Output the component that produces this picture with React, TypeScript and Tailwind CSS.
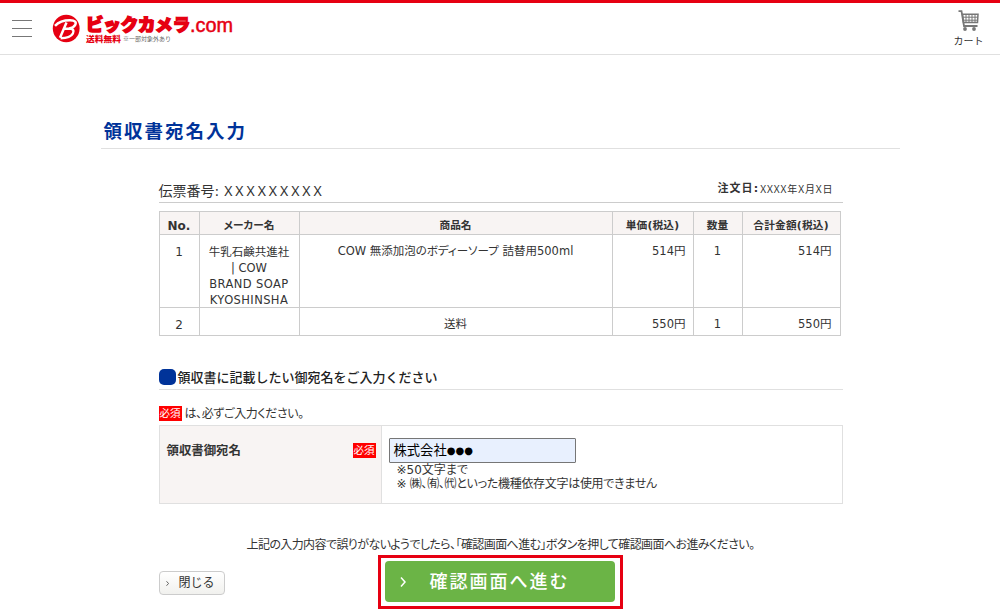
import React from 'react';

const items = [
  {
    no: 1,
    maker: ['牛乳石鹸共進社', '| COW', 'BRAND SOAP', 'KYOSHINSHA'],
    name: 'COW 無添加泡のボディーソープ 詰替用500ml',
    price: '514円',
    count: 1,
    total: '514円',
    height: 'h-[73px]',
  },
  { no: 2, maker: [], name: '送料', price: '550円', count: 1, total: '550円', height: 'h-[28px]' },
];

const Logo: React.FC = () => (
  <svg className="ml-5 mt-[9px]" width="190" height="38" viewBox="0 0 190 38">
    <ellipse cx="14.2" cy="16.5" rx="13.4" ry="13.7" fill="#e60012" />
    <path
      d="M3 13.8C7 9.5 12 8.2 18 8.2c5.3 0 6.6 2 5.2 4.6-1 1.900-3.200 3.200-6 3.700 4 .2 5.200 2.300 3.700 5-1.800 3.300-6.800 4.700-12.300 4.700M14.500 10.500L8 25.800M12.500 16.700h5"
      fill="none"
      stroke="#fff"
      strokeWidth="2.500"
      strokeLinejoin="round"
    />
    <text
      x="34"
      y="18.800"
      fontSize="16.500"
      fontWeight="900"
      fill="#e60012"
      stroke="#e60012"
      strokeWidth="1.600"
      textLength="104"
      lengthAdjust="spacingAndGlyphs"
      className="font-['Noto_Sans_CJK_JP',sans-serif]"
    >
      ビックカメラ
    </text>
    <text
      x="138"
      y="20"
      fontSize="20"
      fill="#e60012"
      stroke="#e60012"
      strokeWidth="0.500"
      textLength="43"
      lengthAdjust="spacingAndGlyphs"
      className="font-['Liberation_Sans',sans-serif]"
    >
      .com
    </text>
    <text
      x="34"
      y="29.500"
      fontSize="8"
      fontWeight="900"
      fill="#e60012"
      textLength="35"
      lengthAdjust="spacingAndGlyphs"
      className="font-['Noto_Sans_CJK_JP',sans-serif]"
    >
      送料無料
    </text>
    <text
      x="71"
      y="28.600"
      fontSize="6"
      fill="#666"
      textLength="48"
      lengthAdjust="spacingAndGlyphs"
      className="font-['Noto_Sans_CJK_JP',sans-serif]"
    >
      ※一部対象外あり
    </text>
  </svg>
);

const CartIcon: React.FC = () => (
  <svg width="22" height="22" viewBox="0 0 22 22" fill="none" stroke="#777">
    <path d="M0.500 1.200h3l2.500 14.800h13.500" strokeWidth="1.800" />
    <path d="M4.500 4.200h15.500L19.500 12.500H5.500z" strokeWidth="1.500" />
    <path d="M8 4v9M11 4v9M14 4v9M17 4v9M5 7.200h15M5 10.200h15" strokeWidth="1" />
    <circle cx="7" cy="19" r="1.900" fill="#777" stroke="none" />
    <circle cx="16" cy="19" r="1.900" fill="#777" stroke="none" />
  </svg>
);

const Required: React.FC = () => (
  <span className="flex h-[15px] w-[23px] shrink-0 items-center justify-center bg-[#f00] text-[10.500px] leading-none text-white">
    必須
  </span>
);

const Chevron: React.FC<{ className: string; width: number }> = ({ className, width }) => (
  <svg className={className} viewBox="0 0 6 10" fill="none" stroke="currentColor" strokeWidth={width}>
    <path d="M1 0.500L5 5L1 9.500" />
  </svg>
);

const App: React.FC = () => {
  return (
    <div className="h-[615px] overflow-hidden whitespace-nowrap bg-white font-['DejaVu_Sans','Noto_Sans_CJK_JP',sans-serif] text-[#333]">
      {/* Header */}
      <header className="flex h-[55px] border-b border-t-[3px] border-b-[#e0e0e0] border-t-[#e60012]">
        <button className="ml-3 mt-[17px] flex h-[17px] w-5 flex-col justify-between">
          <span className="h-px w-full bg-[#777]" />
          <span className="h-px w-full bg-[#777]" />
          <span className="h-px w-full bg-[#777]" />
        </button>
        <Logo />
        <div className="ml-auto mr-[17px] flex w-[29px] flex-col items-center pt-[7px]">
          <CartIcon />
          <span className="mt-[4px] text-[10px] leading-3">カート</span>
        </div>
      </header>

      <main className="mx-auto w-[799px] pt-[62px]">
        <h1 className="h-8 border-b border-[#e0e0e0] pl-[3px] text-[18.500px] font-bold leading-[30px] tracking-[2px] text-[#039]">
          領収書宛名入力
        </h1>

        <div className="ml-[58px] w-[684px]">
          {/* Order number and date */}
          <div className="mt-[25px] flex h-[29px] justify-between border-b border-[#ccc]">
            <p className="flex pt-[7px] text-[14px] leading-[20px]">
              <span>伝票番号:</span>
              <span className="ml-[5px] font-['Noto_Sans'] tracking-[2.950px]">XXXXXXXXX</span>
            </p>
            <p className="flex pr-[9px] pt-[6px] text-[11px] leading-[18px]">
              <span className="font-bold tracking-[1.100px]">注文日:</span>
              <span className="ml-px font-['Noto_Sans','Noto_Sans_CJK_JP'] text-[10px] tracking-[0.900px]">
                XXXX年X月X日
              </span>
            </p>
          </div>

          {/* Items */}
          <table className="mt-2 w-[682px] table-fixed border-collapse text-center text-[11.500px] leading-[16px]">
            <colgroup>
              <col className="w-[40px]" />
              <col className="w-[100px]" />
              <col className="w-[313px]" />
              <col className="w-[81px]" />
              <col className="w-[49px]" />
              <col className="w-[98px]" />
            </colgroup>
            <thead>
              <tr className="h-[23px] bg-[#f8f4f3] text-[10.700px] font-bold [&>th]:border [&>th]:border-[#ccc] [&>th]:p-0 [&>th]:pt-[6px]">
                <th className="text-[12px]">No.</th>
                <th className="[font-feature-settings:'palt']">メーカー名</th>
                <th>商品名</th>
                <th className="tracking-[0.200px]">単価(税込)</th>
                <th>数量</th>
                <th className="tracking-[0.200px]">合計金額(税込)</th>
              </tr>
            </thead>
            <tbody>
              {items.map((item) => (
                <tr
                  key={item.no}
                  className={`${item.height} align-top [&>td]:border [&>td]:border-[#ccc] [&>td]:p-0 [&>td]:pt-2`}
                >
                  <td className="text-[12px]">
                    <div className="pt-px">{item.no}</div>
                  </td>
                  <td>
                    <div className="-mb-1 pt-px">
                      {item.maker.map((line) => (
                        <div key={line} className={/^[A-Z]/.test(line) ? 'tracking-[0.400px]' : ''}>
                          {line}
                        </div>
                      ))}
                    </div>
                  </td>
                  <td className="[font-feature-settings:'palt']">{item.name}</td>
                  <td>
                    <div className="pr-[7px] text-right">{item.price}</div>
                  </td>
                  <td>{item.count}</td>
                  <td>
                    <div className="pr-[8px] text-right">{item.total}</div>
                  </td>
                </tr>
              ))}
            </tbody>
          </table>

          {/* Addressee */}
          <h2 className="mt-[31px] flex h-[23px] items-start border-b border-[#e0e0e0] text-[13px] font-medium leading-[20px] text-[#222]">
            <span className="mt-[2px] h-4 w-[17px] rounded-[5px] bg-[#039]" />
            <span className="ml-[2px] pt-px">領収書に記載したい御宛名をご入力ください</span>
          </h2>
          <p className="mt-[16px] flex h-[15px] items-center text-[12px]">
            <Required />
            <span className="ml-[3px] tracking-[-0.400px] [font-feature-settings:'palt']">は、必ずご入力ください。</span>
          </p>

          <div className="mt-1 flex h-[79px] border border-[#e0e0e0]">
            <div className="flex w-[222px] items-start justify-between border-r border-[#e0e0e0] bg-[#f8f4f3] pl-[7px] pr-[5px] pt-[17px]">
              <span className="text-[12.400px] font-bold leading-[15px]">領収書御宛名</span>
              <Required />
            </div>
            <div className="pl-[7px] pt-[12px]">
              <div className="flex h-[25px] w-[187px] items-center rounded-[1px] border border-[#767676] bg-[#e8f0fe] pl-[4px] pt-px text-[13.300px] text-black">
                株式会社<span className="pb-px text-[10px]">●●●</span>
              </div>
              <div className="pl-[8px] text-[12px] leading-[14px] [font-feature-settings:'palt']">
                <p>※50文字まで</p>
                <p className="tracking-[-0.300px]">※ ㈱、㈲、㈹といった機種依存文字は使用できません</p>
              </div>
            </div>
          </div>

          <p className="mt-[32px] pl-[88px] text-[12px] leading-[18px] tracking-[-0.590px] [font-feature-settings:'palt']">
            上記の入力内容で誤りがないようでしたら、「確認画面へ進む」ボタンを押して確認画面へお進みください。
          </p>

          {/* Actions */}
          <div className="mt-px flex items-start">
            <button className="mt-[16px] flex h-[24px] w-[66px] items-center rounded-[4px] border border-[#ccc] bg-linear-to-b from-white to-[#f1f1ee] pl-[6px] text-[12px]">
              <Chevron className="h-[5px] w-[3px]" width={1.5} />
              <span className="ml-[10px]">閉じる</span>
            </button>
            <div className="ml-[153px] h-[54px] w-[245px] border-[3px] border-[#e60012] p-1 pt-[3px]">
              <button className="flex h-[41px] w-[230px] items-center rounded-[4px] bg-[#6bb446] pl-[15px] text-[18px] font-medium text-white">
                <Chevron className="h-[10px] w-[6px]" width={1.5} />
                <span className="ml-[24px] tracking-[2px]">確認画面へ進む</span>
              </button>
            </div>
          </div>
        </div>
      </main>
    </div>
  );
};

export default App;
